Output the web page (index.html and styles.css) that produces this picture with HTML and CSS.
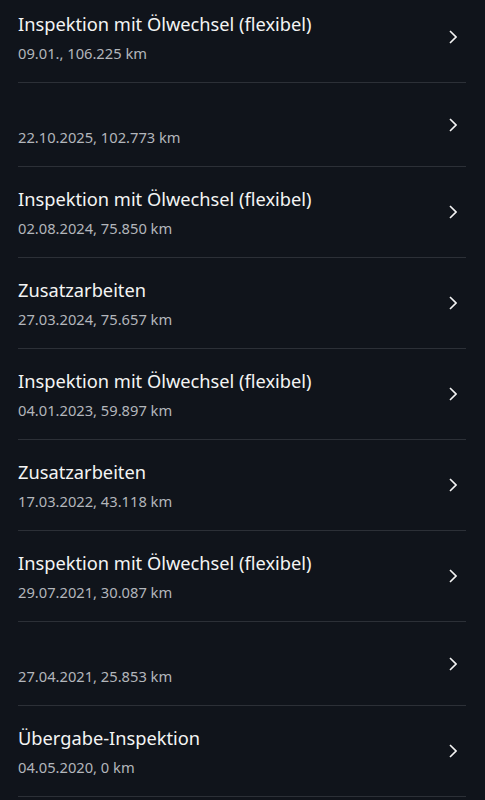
FILE: index.html
```html
<!DOCTYPE html>
<html lang="de">
<head>
<meta charset="utf-8">
<link rel="stylesheet" href="styles.css">
</head>
<body>
<ul class="list">
  <li class="row"><div class="text"><div class="title">Inspektion mit Ölwechsel (flexibel)</div><div class="sub">09.01., 106.225 km</div></div><svg class="chev" viewBox="0 0 8 14"><path d="M1 1 L7 7 L1 13"/></svg></li>
  <li class="row"><div class="text"><div class="title"></div><div class="sub">22.10.2025, 102.773 km</div></div><svg class="chev" viewBox="0 0 8 14"><path d="M1 1 L7 7 L1 13"/></svg></li>
  <li class="row"><div class="text"><div class="title">Inspektion mit Ölwechsel (flexibel)</div><div class="sub">02.08.2024, 75.850 km</div></div><svg class="chev" viewBox="0 0 8 14"><path d="M1 1 L7 7 L1 13"/></svg></li>
  <li class="row"><div class="text"><div class="title">Zusatzarbeiten</div><div class="sub">27.03.2024, 75.657 km</div></div><svg class="chev" viewBox="0 0 8 14"><path d="M1 1 L7 7 L1 13"/></svg></li>
  <li class="row"><div class="text"><div class="title">Inspektion mit Ölwechsel (flexibel)</div><div class="sub">04.01.2023, 59.897 km</div></div><svg class="chev" viewBox="0 0 8 14"><path d="M1 1 L7 7 L1 13"/></svg></li>
  <li class="row"><div class="text"><div class="title">Zusatzarbeiten</div><div class="sub">17.03.2022, 43.118 km</div></div><svg class="chev" viewBox="0 0 8 14"><path d="M1 1 L7 7 L1 13"/></svg></li>
  <li class="row"><div class="text"><div class="title">Inspektion mit Ölwechsel (flexibel)</div><div class="sub">29.07.2021, 30.087 km</div></div><svg class="chev" viewBox="0 0 8 14"><path d="M1 1 L7 7 L1 13"/></svg></li>
  <li class="row"><div class="text"><div class="title"></div><div class="sub">27.04.2021, 25.853 km</div></div><svg class="chev" viewBox="0 0 8 14"><path d="M1 1 L7 7 L1 13"/></svg></li>
  <li class="row"><div class="text"><div class="title">Übergabe-Inspektion</div><div class="sub">04.05.2020, 0 km</div></div><svg class="chev" viewBox="0 0 8 14"><path d="M1 1 L7 7 L1 13"/></svg></li>
</ul>
</body>
</html>
```
FILE: styles.css
```css
html, body {
  margin: 0;
  padding: 0;
  background: #10141b;
  height: 100%;
  overflow: hidden;
}
body {
  font-family: "Noto Sans", "Open Sans", sans-serif;
  color: #f2f2f2;
}
.list {
  list-style: none;
  margin: -8px 0 0 0;
  padding: 0 19px 0 18px;
}
.row {
  display: flex;
  align-items: center;
  border-bottom: 1px solid #2c3037;
}
.text {
  flex: 1;
  padding: 20px 0 19px 0;
  display: flex;
  flex-direction: column;
  gap: 7px;
}
.title {
  font-size: 18.25px;
  line-height: 24px;
  color: #f4f4f4;
}
.title:empty {
  height: 17px;
}
.sub {
  font-size: 14.7px;
  line-height: 20px;
  color: #b3b6bb;
}
.chev {
  width: 8px;
  height: 14px;
  margin-right: 9px;
  fill: none;
  stroke: #f4f4f4;
  stroke-width: 1.6;
}
```
